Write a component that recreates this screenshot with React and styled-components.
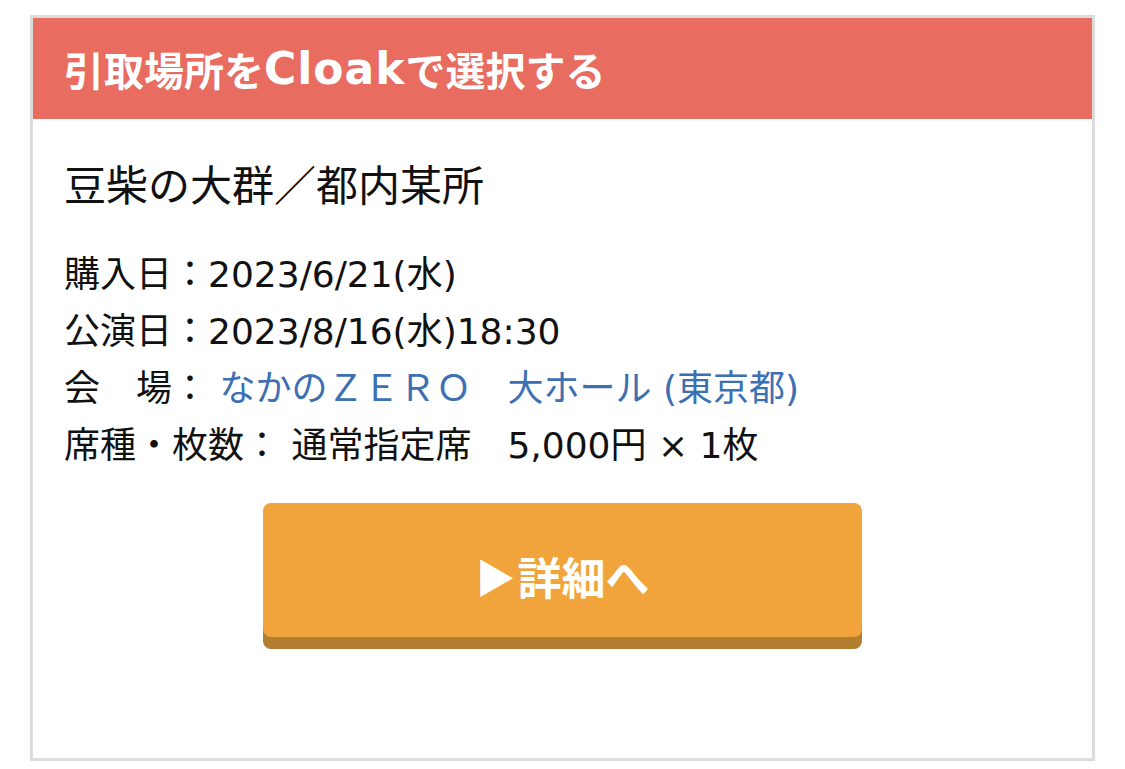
import React from "react";
import styled, { createGlobalStyle } from "styled-components";

const GlobalStyle = createGlobalStyle`
  body {
    margin: 0;
    background: #ffffff;
    color: #111111;
    font-family: "DejaVu Sans", "Noto Sans CJK JP", sans-serif;
  }
`;

const Card = styled.section`
  box-sizing: border-box;
  width: 1065px;
  margin: 15px 30px 8px;
  border: 3px solid #dcdcdc;
  background: #ffffff;
`;

const Header = styled.h2`
  display: flex;
  align-items: center;
  height: 101px;
  margin: 0;
  padding: 0 31px;
  background: #e86c60;
  color: #ffffff;
  font-size: 40px;
  font-weight: 700;
  white-space: pre;
`;

// latin words in the header run a little larger than the kana around them
const Latin = styled.span`
  font-size: 44px;
  letter-spacing: 1px;
`;

const Body = styled.div`
  padding: 36px 31px 121px;
`;

const Title = styled.h3`
  margin: 0;
  font-size: 42px;
  line-height: 63px;
  font-weight: 400;
`;

const InfoList = styled.div`
  margin-top: 28px;
`;

const InfoRow = styled.div`
  font-size: 36px;
  line-height: 57px;
  white-space: pre;
`;

const VenueLink = styled.a`
  color: #3c70b2;
  text-decoration: none;
`;

const DetailButton = styled.a`
  box-sizing: border-box;
  display: flex;
  align-items: center;
  justify-content: center;
  width: 599px;
  height: 134px;
  margin: 29px auto 0;
  padding-top: 12px;
  border-radius: 8px;
  background: #f0a43b;
  box-shadow: 0 12px 0 #b27f30;
  color: #ffffff;
  font-size: 44px;
  font-weight: 700;
  text-decoration: none;
  cursor: pointer;
`;

const Arrow = styled.span`
  font-family: "Noto Sans CJK JP", sans-serif;
  font-size: 40px;
  margin-right: 2px;
`;

const ticket = {
  title: "豆柴の大群／都内某所",
  purchased: "2023/6/21(水)",
  performance: "2023/8/16(水)18:30",
  venue: "なかのＺＥＲＯ　大ホール (東京都)",
  seat: "通常指定席　5,000円 × 1枚",
};

export default function App() {
  return (
    <>
      <GlobalStyle />
      <Card>
        <Header>
          引取場所を<Latin>Cloak</Latin>で選択する
        </Header>
        <Body>
          <Title>{ticket.title}</Title>
          <InfoList>
            <InfoRow>購入日：{ticket.purchased}</InfoRow>
            <InfoRow>公演日：{ticket.performance}</InfoRow>
            <InfoRow>
              会　場： <VenueLink href="#">{ticket.venue}</VenueLink>
            </InfoRow>
            <InfoRow>席種・枚数： {ticket.seat}</InfoRow>
          </InfoList>
          <DetailButton href="#">
            <Arrow>▶</Arrow>詳細へ
          </DetailButton>
        </Body>
      </Card>
    </>
  );
}
